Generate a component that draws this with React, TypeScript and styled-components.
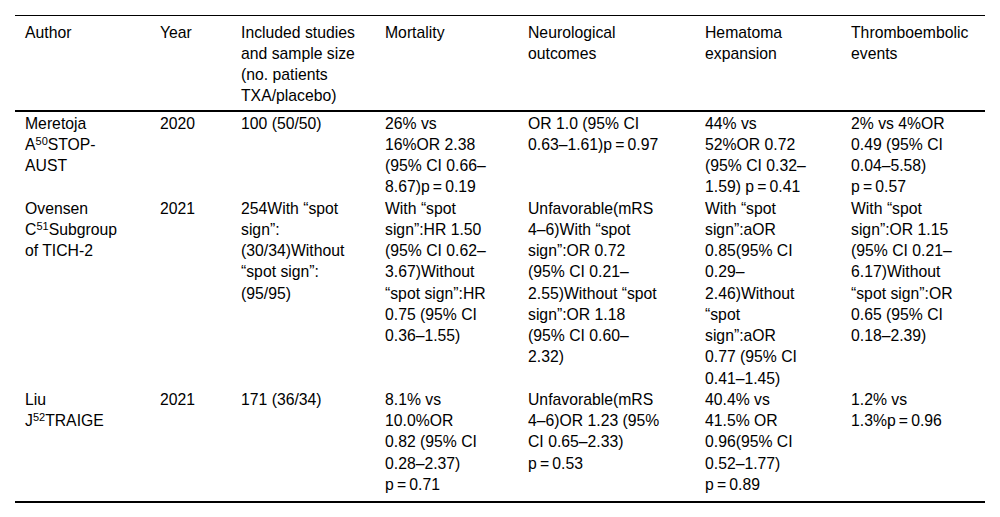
import React from 'react';
import styled, { createGlobalStyle } from 'styled-components';

const GlobalStyle = createGlobalStyle`
  html, body {
    margin: 0;
    padding: 0;
    background: #fff;
  }
  body {
    font-family: "Liberation Sans", Arial, sans-serif;
    color: #000;
  }
`;

interface CellProps {
  $inset: number;
}

const StyledPage = styled.div`
  padding: 15px;
`;

const StyledTable = styled.table`
  width: 970px;
  border-collapse: collapse;
  table-layout: fixed;
  font-size: 15.75px;
  line-height: 1.35;
  border-top: 1px solid #000;
  border-bottom: 2px solid #000;
`;

const StyledHead = styled.thead`
  border-bottom: 2px solid #000;
`;

const StyledBody = styled.tbody`
  tr:first-child td {
    padding-top: 0.5px;
  }
  tr:last-child td {
    padding-bottom: 6px;
  }
`;

const StyledHeadCell = styled.th<CellProps>`
  font-weight: normal;
  text-align: left;
  vertical-align: top;
  padding: 5.5px ${(p) => p.$inset}px 3.5px 10px;
`;

const StyledCell = styled.td<CellProps>`
  vertical-align: top;
  padding: 0 ${(p) => p.$inset}px 0 10px;
`;

const StyledSup = styled.sup`
  font-size: 11px;
  line-height: 0;
  vertical-align: 5px;
`;

// p = 0.xx : 가는 공백, 줄바꿈 금지
const StyledP = styled.span`
  white-space: nowrap;
`;

const P = ({ v }: { v: string }) => <StyledP>{`p\u2009=\u2009${v}`}</StyledP>;

// width: 열 너비, text: 글이 차지하는 폭
const columns = [
  { label: 'Author', width: 135, text: 98 },
  { label: 'Year', width: 81, text: 60 },
  { label: 'Included studies and sample size (no. patients TXA/placebo)', width: 144, text: 120 },
  { label: 'Mortality', width: 143, text: 102 },
  { label: 'Neurological outcomes', width: 177, text: 134 },
  { label: 'Hematoma expansion', width: 146, text: 104 },
  { label: 'Thromboembolic events', width: 144, text: 110 },
];

const rows: React.ReactNode[][] = [
  [
    <>Meretoja A<StyledSup>50</StyledSup>STOP-AUST</>,
    '2020',
    '100 (50/50)',
    <>26% vs 16%OR 2.38 (95% CI 0.66–8.67)<wbr /><P v='0.19' /></>,
    <>OR 1.0 (95% CI 0.63–1.61)<wbr /><P v='0.97' /></>,
    <>44% vs 52%OR 0.72 (95% CI 0.32–1.59) <P v='0.41' /></>,
    <>2% vs 4%OR 0.49 (95% CI 0.04–5.58)<wbr /><P v='0.57' /></>,
  ],
  [
    <>Ovensen C<StyledSup>51</StyledSup>Subgroup of TICH-2</>,
    '2021',
    <>254With “spot sign”:<wbr />(30/34)Without “spot sign”:<wbr />(95/95)</>,
    'With “spot sign”:HR 1.50 (95% CI 0.62–3.67)Without “spot sign”:HR 0.75 (95% CI 0.36–1.55)',
    'Unfavorable(mRS 4–6)With “spot sign”:OR 0.72 (95% CI 0.21–2.55)Without “spot sign”:OR 1.18 (95% CI 0.60–2.32)',
    'With “spot sign”:aOR 0.85(95% CI 0.29–2.46)Without “spot sign”:aOR 0.77 (95% CI 0.41–1.45)',
    'With “spot sign”:OR 1.15 (95% CI 0.21–6.17)Without “spot sign”:OR 0.65 (95% CI 0.18–2.39)',
  ],
  [
    <>Liu J<StyledSup>52</StyledSup>TRAIGE</>,
    '2021',
    '171 (36/34)',
    <>8.1% vs 10.0%OR 0.82 (95% CI 0.28–2.37)<wbr /><P v='0.71' /></>,
    <>Unfavorable(mRS 4–6)OR 1.23 (95% CI 0.65–2.33)<wbr /><P v='0.53' /></>,
    <>40.4% vs 41.5% OR 0.96(95% CI 0.52–1.77)<wbr /><P v='0.89' /></>,
    <>1.2% vs 1.3%<P v='0.96' /></>,
  ],
];

const inset = (i: number) => columns[i].width - 10 - columns[i].text;

const App = () => {
  return (
    <>
      <GlobalStyle />
      <StyledPage>
        <StyledTable>
          <colgroup>
            {columns.map((c) => (
              <col key={c.label} style={{ width: c.width }} />
            ))}
          </colgroup>
          <StyledHead>
            <tr>
              {columns.map((c, i) => (
                <StyledHeadCell key={c.label} $inset={inset(i)}>
                  {c.label}
                </StyledHeadCell>
              ))}
            </tr>
          </StyledHead>
          <StyledBody>
            {rows.map((row, r) => (
              <tr key={r}>
                {row.map((cell, i) => (
                  <StyledCell key={i} $inset={inset(i)}>
                    {cell}
                  </StyledCell>
                ))}
              </tr>
            ))}
          </StyledBody>
        </StyledTable>
      </StyledPage>
    </>
  );
};

export default App;
